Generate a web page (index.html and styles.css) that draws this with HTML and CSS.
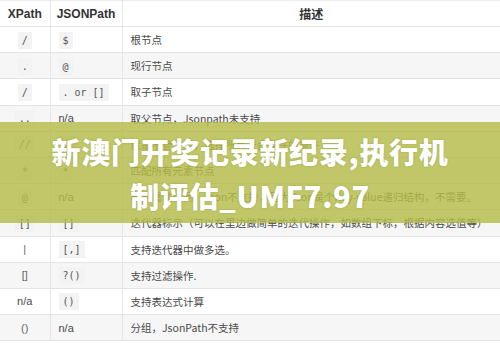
FILE: index.html
```html
<!DOCTYPE html>
<html lang="zh">
<head>
<meta charset="utf-8">
<link rel="stylesheet" href="styles.css">
</head>
<body>
<div class="page">
  <table class="tbl">
    <colgroup><col class="c1"><col class="c2"><col class="c3"></colgroup>
    <thead>
      <tr><th>XPath</th><th>JSONPath</th><th>描述</th></tr>
    </thead>
    <tbody>
      <tr><td class="m"><code>/</code></td><td><code>$</code></td><td class="d">根节点</td></tr>
      <tr><td class="m"><code>.</code></td><td><code>@</code></td><td class="d">现行节点</td></tr>
      <tr><td class="m"><code>/</code></td><td><code>. or []</code></td><td class="d">取子节点</td></tr>
      <tr><td class="m"><code>..</code></td><td>n/a</td><td class="d">取父节点，Jsonpath未支持</td></tr>
      <tr><td class="m"><code>//</code></td><td><code>..</code></td><td class="d">就是不管位置，选择所有符合条件的条件</td></tr>
      <tr><td class="m"><code>*</code></td><td><code>*</code></td><td class="d">匹配所有元素节点</td></tr>
      <tr><td class="m"><code>@</code></td><td>n/a</td><td class="d">根据属性访问，Json不支持，因为Json是个Key-value递归结构，不需要。</td></tr>
      <tr><td class="m"><code>[]</code></td><td><code>[]</code></td><td class="d">迭代器标示（可以在里边做简单的迭代操作，如数组下标，根据内容选值等）</td></tr>
      <tr><td class="m"><span class="plain">|</span></td><td><code>[,]</code></td><td class="d">支持迭代器中做多选。</td></tr>
      <tr><td class="m"><span class="plain">[]</span></td><td><code>?()</code></td><td class="d">支持过滤操作.</td></tr>
      <tr><td class="m">n/a</td><td><code>()</code></td><td class="d">支持表达式计算</td></tr>
      <tr><td class="m"><span class="plain">()</span></td><td>n/a</td><td class="d">分组，JsonPath不支持</td></tr>
    </tbody>
  </table>
  <div class="banner">
    <h1 class="title">新澳门开奖记录新纪录,执行机<br>制评估_UMF7.97</h1>
  </div>
</div>
</body>
</html>
```
FILE: styles.css
```css
html, body {
  margin: 0;
  padding: 0;
  background: #fff;
}
.page {
  position: relative;
  width: 500px;
  height: 346px;
  overflow: hidden;
  font-family: "Liberation Sans", "Noto Sans CJK SC", sans-serif;
}
.tbl {
  width: 500px;
  border-collapse: collapse;
  table-layout: fixed;
  border-top: 1px solid #ececec;
  font-size: 11px;
  color: #4a4a4a;
}
.c1 { width: 50px; }
.c2 { width: 72px; }
.tbl th {
  height: 25px;
  font-weight: bold;
  color: #333;
  font-size: 12px;
  text-align: center;
  border-right: 1px solid #e6e6e6;
  border-bottom: 1px solid #e3e3e3;
  padding: 0;
}
.tbl td {
  height: 25.2px;
  padding: 0 0 0 8px;
  border-right: 1px solid #e6e6e6;
  border-bottom: 1px solid #e3e3e3;
  white-space: nowrap;
  overflow: hidden;
}
.tbl th:last-child, .tbl td:last-child { border-right: none; }
.tbl td.m { text-align: center; padding: 0; }
.tbl td.d {
  font-family: "Noto Sans CJK SC", "Liberation Sans", sans-serif;
  font-size: 10.5px;
  padding-left: 8px;
}
.tbl tbody tr:nth-child(even) { background: #f6f6f6; }
code {
  font-family: "DejaVu Sans Mono", monospace;
  font-size: 10px;
  color: #555;
  background: #f3f3f3;
  padding: 3px 4px;
}
.plain {
  font-family: "Liberation Sans", sans-serif;
  font-size: 11px;
  color: #666;
}
.banner {
  position: absolute;
  left: 0;
  top: 122px;
  width: 500px;
  height: 101px;
  background: rgba(180, 188, 72, 0.82);
  display: flex;
  align-items: center;
  justify-content: center;
}
.title {
  margin: 0;
  color: #fff;
  font-family: "Noto Sans CJK SC", sans-serif;
  font-weight: 900;
  font-size: 29px;
  line-height: 44px;
  letter-spacing: 0.7px;
  text-align: center;
  text-shadow: 0 0 2px rgba(80, 90, 20, 0.35);
}
```
